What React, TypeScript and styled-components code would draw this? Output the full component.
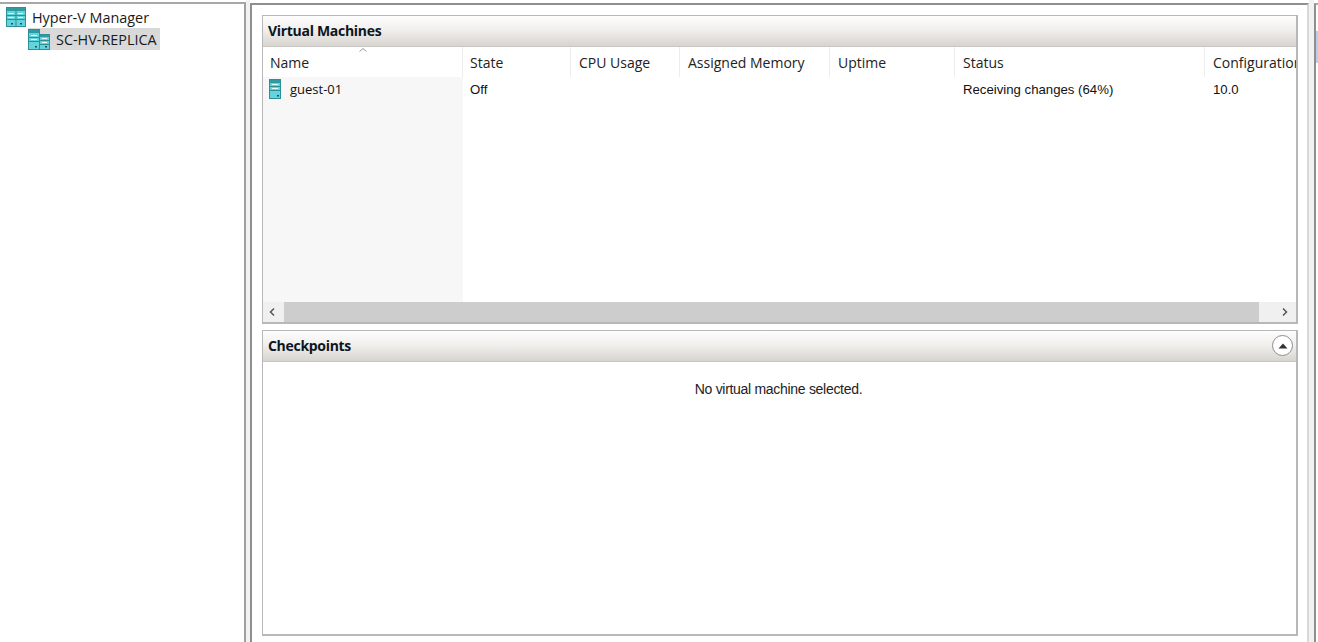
import styled, { createGlobalStyle } from "styled-components";

const GlobalStyle = createGlobalStyle`
  html, body {
    margin: 0;
    padding: 0;
    background: #ffffff;
    overflow: hidden;
  }
`;

const Window = styled.div`
  display: flex;
  width: 1318px;
  height: 642px;
  overflow: hidden;
  background: #ffffff;
`;

const TreePane = styled.div`
  flex: none;
  box-sizing: border-box;
  width: 246px;
  height: 642px;
  margin-top: 2px;
  padding: 2px 0 0 6px;
  border-top: 2px solid #a8a8a8;
  border-right: 2px solid #a0a0a0;
  font-family: "Open Sans", "Noto Sans", sans-serif;
  font-size: 14.4px;
  color: #1a1a1a;
`;

const TreeRow = styled.div<{ $indent?: number; $selected?: boolean }>`
  display: flex;
  align-items: center;
  gap: 6px;
  width: fit-content;
  height: 22px;
  margin-left: ${(p) => p.$indent ?? 0}px;
  padding-right: 3px;
  background: ${(p) => (p.$selected ? "#d9d9d9" : "transparent")};
  white-space: nowrap;
`;

const Splitter = styled.div<{ $width: number }>`
  flex: none;
  width: ${(p) => p.$width}px;
  background: #f2f2f2;
`;

const ContentPane = styled.div`
  flex: none;
  box-sizing: border-box;
  display: flex;
  flex-direction: column;
  gap: 6px;
  width: 1059px;
  height: 642px;
  margin-top: 3px;
  padding: 10px 9px 0 10px;
  border-top: 2px solid #8f8f8f;
  border-left: 2px solid #8f8f8f;
  border-right: 2px solid #d8d8d8;
`;

const ActionsPane = styled.div`
  flex: 1;
  margin-top: 3px;
  padding-top: 26px;
  border-top: 2px solid #a8a8a8;
  border-left: 2px solid #8f8f8f;
  background: #ffffff;
`;

const ActionsHeader = styled.div`
  height: 32px;
  background: #b9cfe4;
`;

const Section = styled.section<{ $height: number }>`
  box-sizing: border-box;
  display: flex;
  flex-direction: column;
  flex: none;
  height: ${(p) => p.$height}px;
  border: 2px solid #b8b8b8;
  border-width: 1px 2px 2px 1px;
  overflow: hidden;
  background: #ffffff;
`;

const SectionHeader = styled.header`
  flex: none;
  display: flex;
  align-items: center;
  justify-content: space-between;
  box-sizing: border-box;
  height: 31px;
  padding: 0 3px 1px 5px;
  background: linear-gradient(#fdfdfd, #f1f0ee 45%, #d8d5cf);
  border-bottom: 1px solid #c8c6c2;
  font-family: "Open Sans", "Noto Sans", sans-serif;
  font-size: 14px;
  font-weight: 700;
  letter-spacing: -0.3px;
  color: #0c1622;
`;

const CollapseButton = styled.div`
  box-sizing: border-box;
  display: flex;
  align-items: center;
  justify-content: center;
  width: 21px;
  height: 21px;
  border: 1px solid #8c8c8c;
  border-radius: 50%;
  background: #ffffff;
`;

const ListBody = styled.div`
  flex: 1;
  min-height: 0;
  position: relative;
  display: flex;
  flex-direction: column;
`;

const ColumnRow = styled.div`
  flex: none;
  display: flex;
  height: 30px;
  font-family: "Open Sans", "Noto Sans", sans-serif;
  font-size: 14px;
  color: #222222;
`;

const Column = styled.div<{ $width: number; $pad: number }>`
  flex: none;
  box-sizing: border-box;
  width: ${(p) => p.$width}px;
  padding: 6px 0 0 ${(p) => p.$pad}px;
  border-right: 1px solid #ededed;
  white-space: nowrap;
  overflow: hidden;
`;

const SortCaret = styled.svg`
  position: absolute;
  left: 96px;
  top: 1px;
`;

const Rows = styled.div`
  flex: 1;
  min-height: 0;
  display: flex;
  background: linear-gradient(to right, #f7f7f7 200px, #ffffff 200px);
`;

const Cell = styled.div<{ $width: number; $pad?: number }>`
  flex: none;
  box-sizing: border-box;
  display: flex;
  align-items: flex-start;
  gap: 9px;
  width: ${(p) => p.$width}px;
  height: 24px;
  padding: 4px 0 0 ${(p) => p.$pad ?? 8}px;
  font-family: "Liberation Sans", Arial, sans-serif;
  font-size: 13.2px;
  line-height: 17px;
  color: #111111;
  white-space: nowrap;
  overflow: hidden;
`;

const NameCell = styled(Cell)`
  padding: 2px 0 0 6px;
  align-items: center;
  height: 22px;
  font-family: "Open Sans", "Noto Sans", sans-serif;
  font-size: 13px;
  background: #f7f7f7;
`;

const ScrollBar = styled.div`
  flex: none;
  display: flex;
  height: 20px;
  background: #f0f0f0;
`;

const ScrollButton = styled.div<{ $width: number; $inset: number }>`
  flex: none;
  box-sizing: border-box;
  display: flex;
  align-items: center;
  width: ${(p) => p.$width}px;
  padding-left: ${(p) => p.$inset}px;
`;

const ScrollThumb = styled.div`
  flex: 1;
  background: #cdcdcd;
`;

const EmptyMessage = styled.div`
  padding-top: 19px;
  padding-right: 2px;
  text-align: center;
  font-family: "Liberation Sans", Arial, sans-serif;
  font-size: 14px;
  letter-spacing: -0.3px;
  color: #222222;
`;

const columns = [
  { label: "Name", width: 200, pad: 7 },
  { label: "State", width: 108, pad: 7 },
  { label: "CPU Usage", width: 109, pad: 8 },
  { label: "Assigned Memory", width: 150, pad: 8 },
  { label: "Uptime", width: 125, pad: 8 },
  { label: "Status", width: 250, pad: 8 },
  { label: "Configuration Version", width: 92, pad: 8 },
];

const ManagerIcon = () => (
  <svg width="20" height="20" viewBox="0 0 20 20">
    <rect x="0.5" y="0.5" width="19" height="19" fill="#64d4dc" stroke="#2f8f98" />
    <rect x="1" y="1" width="18" height="3" fill="#2f9aa2" />
    <path d="M10 1v18" stroke="#2f8f98" />
    <path d="M1 8.5h18M1 12.5h18" stroke="#2f8f98" />
    <path d="M2.5 6.5h5M12 6.5h5M2.5 10.5h5M12 10.5h5" stroke="#e8ffff" />
    <rect x="14" y="16" width="2" height="1.5" fill="#14565c" />
    <rect x="5" y="16" width="2" height="1.5" fill="#14565c" />
  </svg>
);

const HostIcon = () => (
  <svg width="22" height="21" viewBox="0 0 22 21">
    <rect x="0.5" y="0.5" width="11" height="20" fill="#64d4dc" stroke="#2f8f98" />
    <rect x="11.5" y="5.5" width="10" height="15" fill="#64d4dc" stroke="#2f8f98" />
    <rect x="1" y="1" width="10" height="3" fill="#2f9aa2" />
    <rect x="12" y="6" width="9" height="2" fill="#2f9aa2" />
    <path d="M1 8.5h10M1 12.5h10M12 11.5h9M12 15.5h9" stroke="#2f8f98" />
    <path d="M3 6.5h6M3 10.5h6M14 9.5h5M14 13.5h5" stroke="#e8ffff" />
    <rect x="7" y="17" width="2" height="1.5" fill="#14565c" />
    <rect x="17" y="17" width="2" height="1.5" fill="#14565c" />
  </svg>
);

const GuestIcon = () => (
  <svg width="12" height="20" viewBox="0 0 12 20">
    <rect x="0.5" y="0.5" width="11" height="19" fill="#64d4dc" stroke="#2f8f98" />
    <rect x="1" y="1" width="10" height="3" fill="#2f9aa2" />
    <path d="M1 7.5h10M1 11.5h10" stroke="#2f8f98" />
    <path d="M3 5.5h6M3 9.5h6" stroke="#e8ffff" />
    <rect x="8" y="16" width="2" height="1.5" fill="#14565c" />
  </svg>
);

const Chevron = ({ left }: { left?: boolean }) => (
  <svg width="8" height="10" viewBox="0 0 8 10">
    <path d={left ? "M6 1.5 2.5 5 6 8.5" : "M2 1.5 5.5 5 2 8.5"} fill="none" stroke="#555555" strokeWidth="1.5" />
  </svg>
);

const App = () => {
  return (
    <Window>
      <GlobalStyle />
      <TreePane>
        <TreeRow>
          <ManagerIcon />
          <span>Hyper-V Manager</span>
        </TreeRow>
        <TreeRow $indent={22} $selected>
          <HostIcon />
          <span>SC-HV-REPLICA</span>
        </TreeRow>
      </TreePane>
      <Splitter $width={4} />
      <ContentPane>
        <Section $height={309}>
          <SectionHeader>Virtual Machines</SectionHeader>
          <ListBody>
            <SortCaret width="8" height="4" viewBox="0 0 8 4">
              <path d="M0.5 3.5 4 0.5 7.5 3.5" fill="none" stroke="#9a9a9a" />
            </SortCaret>
            <ColumnRow>
              {columns.map((column) => (
                <Column key={column.label} $width={column.width} $pad={column.pad}>
                  {column.label}
                </Column>
              ))}
            </ColumnRow>
            <Rows>
              <NameCell $width={200}>
                <GuestIcon />
                guest-01
              </NameCell>
              <Cell $width={108} $pad={7}>Off</Cell>
              <Cell $width={109} />
              <Cell $width={150} />
              <Cell $width={125} />
              <Cell $width={250}>Receiving changes (64%)</Cell>
              <Cell $width={92}>10.0</Cell>
            </Rows>
            <ScrollBar>
              <ScrollButton $width={21} $inset={5}>
                <Chevron left />
              </ScrollButton>
              <ScrollThumb />
              <ScrollButton $width={37} $inset={22}>
                <Chevron />
              </ScrollButton>
            </ScrollBar>
          </ListBody>
        </Section>
        <Section $height={306}>
          <SectionHeader>
            Checkpoints
            <CollapseButton>
              <svg width="10" height="6" viewBox="0 0 10 6">
                <path d="M5 0.5 9.5 5.5H0.5Z" fill="#333333" />
              </svg>
            </CollapseButton>
          </SectionHeader>
          <EmptyMessage>No virtual machine selected.</EmptyMessage>
        </Section>
      </ContentPane>
      <Splitter $width={5} />
      <ActionsPane>
        <ActionsHeader />
      </ActionsPane>
    </Window>
  );
};

export default App;
